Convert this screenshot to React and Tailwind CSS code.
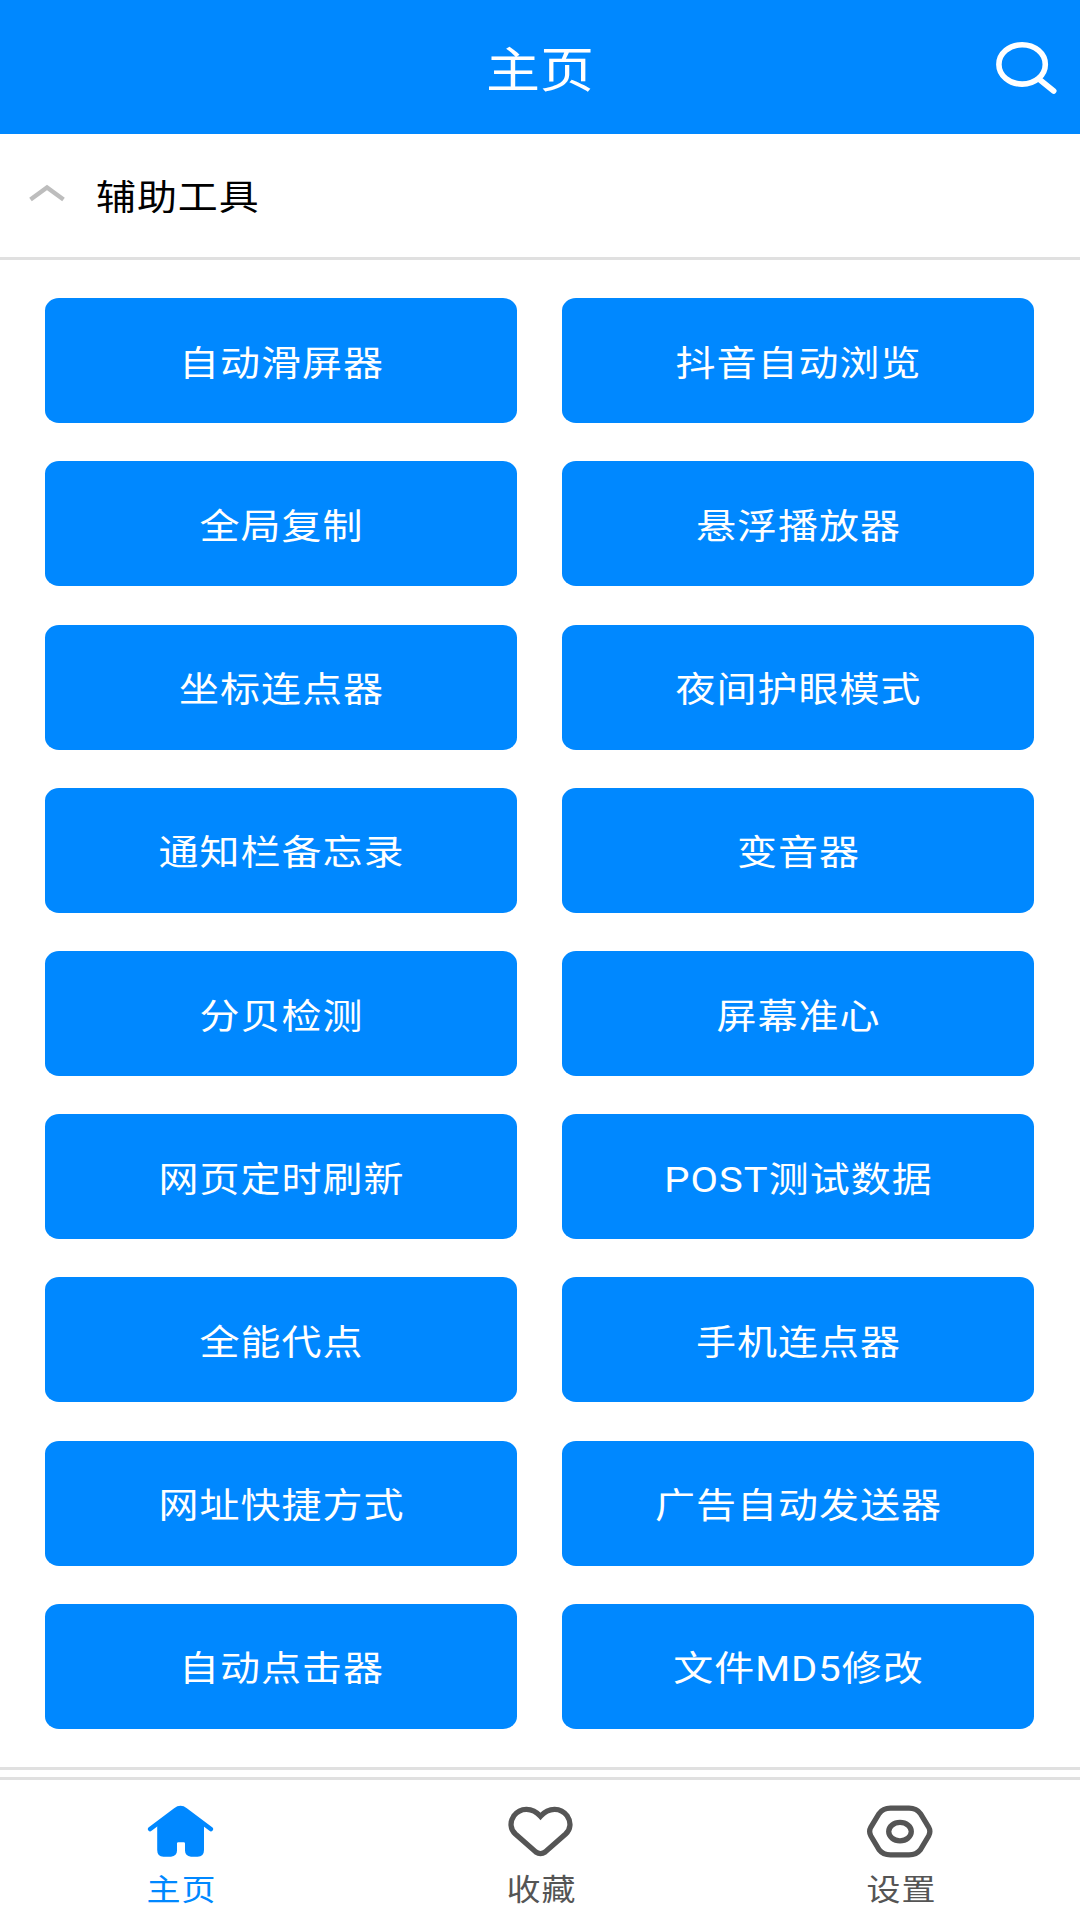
const tools = [
  '自动滑屏器', '抖音自动浏览',
  '全局复制', '悬浮播放器',
  '坐标连点器', '夜间护眼模式',
  '通知栏备忘录', '变音器',
  '分贝检测', '屏幕准心',
  '网页定时刷新', 'POST测试数据',
  '全能代点', '手机连点器',
  '网址快捷方式', '广告自动发送器',
  '自动点击器', '文件MD5修改',
];

function SearchIcon() {
  return (
    <svg className="block h-[60px] w-[68px]" viewBox="0 0 68 60" fill="none" stroke="#fff">
      <ellipse cx="30.1" cy="27.4" rx="23.2" ry="19.7" strokeWidth="5.6" />
      <path d="M47.5 42.5 61.7 54" strokeWidth="5.6" strokeLinecap="round" />
    </svg>
  );
}

function HomeIcon() {
  return (
    <svg className="block h-[56px] w-[68px]" viewBox="0 0 68 56" fill="#0088ff">
      <path d="M4.2 27 29.5 8Q34.5 4.4 39.5 8L64.8 27" fill="none" stroke="#0088ff" strokeWidth="4.6" strokeLinecap="round" />
      <path d="M30 7.6Q34.5 4.6 39 7.6L58 22.5V48Q58 54.7 51.5 54.7H45Q39 54 39 48.5V41.5Q39 40.3 37.8 40.3H32.2Q31 40.3 31 41.5V48.5Q31 54 25 54.7H17.5Q11.2 54.7 11.2 48V22.5Z" />
    </svg>
  );
}

function HeartIcon() {
  return (
    <svg className="block h-[56px] w-[68px]" viewBox="0 0 68 56" fill="none" stroke="#555" strokeWidth="5.3">
      <path d="M34.5 14.2C26 4.6 14 5.5 7.9 13.8C3.6 20 4.2 27.2 9.4 32L29.8 50Q34.5 53.2 39.2 50L59.6 32C64.8 27.2 65.4 20 61.1 13.8C55 5.5 43 4.6 34.5 14.2Z" />
    </svg>
  );
}

function SettingsIcon() {
  return (
    <svg className="block h-[56px] w-[68px]" viewBox="0 0 68 56" fill="none" stroke="#555" strokeWidth="5.3">
      <path d="M24.5 6.2H43Q50.5 6.2 54.5 11.7L62.6 25Q65.1 29.5 62.6 34L54.5 47.6Q50.5 52.8 43 52.8H24.5Q17 52.8 13 47.6L4.9 34Q2.4 29.5 4.9 25L13 11.7Q17 6.2 24.5 6.2Z" />
      <ellipse cx="34" cy="29.6" rx="11.3" ry="9.2" />
    </svg>
  );
}

const tabs = [
  { label: '主页', Icon: HomeIcon, color: 'text-[#0088ff]' },
  { label: '收藏', Icon: HeartIcon, color: 'text-[#555555]' },
  { label: '设置', Icon: SettingsIcon, color: 'text-[#555555]' },
];

export default function App() {
  return (
    <div className="flex h-[1920px] w-[1080px] flex-col overflow-hidden bg-white font-['Roboto','Noto_Sans_CJK_SC',sans-serif]">
      <header className="grid h-[134px] shrink-0 grid-cols-[1fr_auto_1fr] items-center bg-[#0088ff]">
        <span />
        <h1 className="mt-[8px] scale-y-[0.89] text-[54px] leading-none text-white">主页</h1>
        <button className="mr-5 justify-self-end"><SearchIcon /></button>
      </header>

      <div className="flex h-[126px] shrink-0 items-center border-b-[3px] border-[#e0e0e0] pl-[29px]">
        <svg className="-mt-[5px] block h-[20px] w-[36px]" viewBox="0 0 36 20" fill="none" stroke="#bdbdbd" strokeWidth="4.4">
          <path d="M1.5 16.5 18 4.5 34.5 16.5" />
        </svg>
        <span className="ml-[31px] mt-1 scale-y-[0.89] text-[40px] leading-none tracking-[0.9px] text-black">辅助工具</span>
      </div>

      <main className="h-[1510px] shrink-0 border-b-[3px] border-[#e0e0e0] px-[45px] pt-[38.3px]">
        <div className="grid grid-cols-[472px_472px] gap-x-[45px] gap-y-[38.2px]">
          {tools.map((name) => (
            <button key={name} className="flex h-[125px] w-[472px] items-center justify-center rounded-[14px/12.5px] bg-[#0088ff] text-white">
              <span className="mt-[6px] scale-y-[0.89] pl-px text-[40px] leading-none tracking-[1px]">{name}</span>
            </button>
          ))}
        </div>
      </main>

      <nav className="mt-[7px] grid grow grid-cols-3 border-t-[3px] border-[#e0e0e0]">
        {tabs.map(({ label, Icon, color }) => (
          <button key={label} className={`flex flex-col items-center pt-[22px] ${color}`}>
            <Icon />
            <span className="mt-[15px] scale-y-[0.87] pl-[3px] text-[34px] leading-none tracking-[0.9px]">{label}</span>
          </button>
        ))}
      </nav>
    </div>
  );
}
